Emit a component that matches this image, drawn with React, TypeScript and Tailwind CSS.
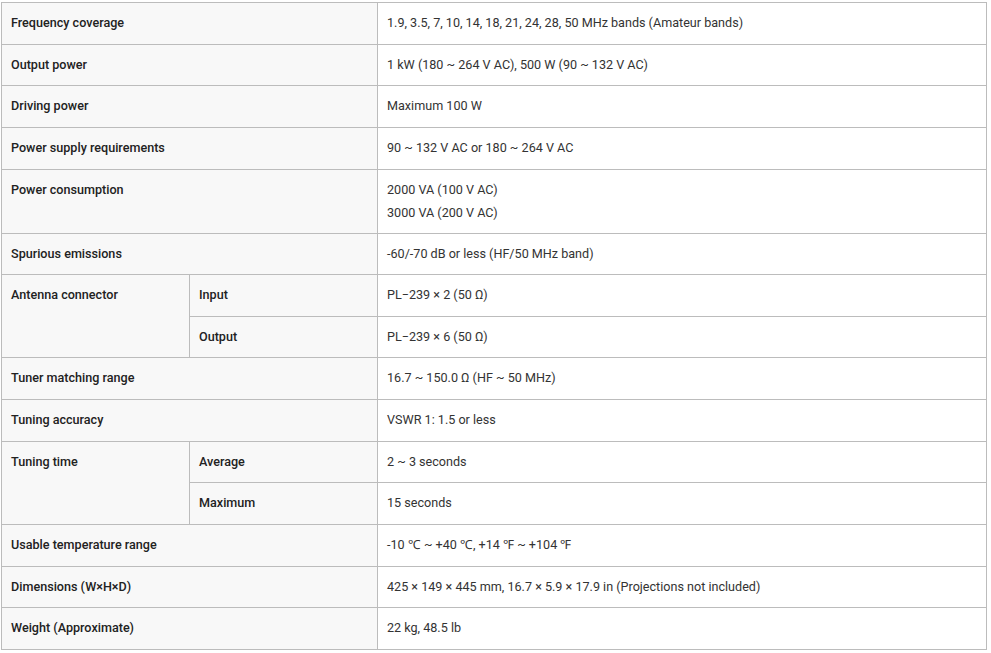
import React from "react";

type Row = { label: string; value: React.ReactNode };

const rows: Row[] = [
  { label: "Frequency coverage", value: "1.9, 3.5, 7, 10, 14, 18, 21, 24, 28, 50 MHz bands (Amateur bands)" },
  { label: "Output power", value: "1 kW (180 ~ 264 V AC), 500 W (90 ~ 132 V AC)" },
  { label: "Driving power", value: "Maximum 100 W" },
  { label: "Power supply requirements", value: "90 ~ 132 V AC or 180 ~ 264 V AC" },
];

const rows2: Row[] = [
  { label: "Tuner matching range", value: "16.7 ~ 150.0 Ω (HF ~ 50 MHz)" },
  { label: "Tuning accuracy", value: "VSWR 1: 1.5 or less" },
];

const rows3: Row[] = [
  { label: "Usable temperature range", value: "-10 ℃ ~ +40 ℃, +14 ℉ ~ +104 ℉" },
  { label: "Dimensions (W×H×D)", value: "425 × 149 × 445 mm, 16.7 × 5.9 × 17.9 in (Projections not included)" },
  { label: "Weight (Approximate)", value: "22 kg, 48.5 lb" },
];

const th = "border border-[#bcbcbc] bg-[#f8f8f8] px-[9px] text-left align-top pt-[11px] font-medium text-[#222]";
const td = "border border-[#bcbcbc] bg-white px-[9px] align-top pt-[11px] text-[#333]";

const Simple = ({ r }: { r: Row }) => (
  <tr className="h-[41.65px]">
    <td colSpan={2} className={th}>{r.label}</td>
    <td className={td}>{r.value}</td>
  </tr>
);

export default function App() {
  return (
    <div className="bg-white w-[991px] h-[653px] pt-[2px] pl-[1px]" style={{ fontFamily: "Roboto, 'Liberation Sans', sans-serif" }}>
      <table className="border-collapse table-fixed w-[986px] text-[12.6px] leading-[18px]">
        <colgroup>
          <col className="w-[188px]" />
          <col className="w-[188px]" />
          <col />
        </colgroup>
        <tbody>
          {rows.map((r) => <Simple key={r.label} r={r} />)}
          <tr className="h-[64px]">
            <td colSpan={2} className={th}>Power consumption</td>
            <td className={td}>
              <div className="flex flex-col gap-[5px]">
                <span>2000 VA (100 V AC)</span>
                <span>3000 VA (200 V AC)</span>
              </div>
            </td>
          </tr>
          <Simple r={{ label: "Spurious emissions", value: "-60/-70 dB or less (HF/50 MHz band)" }} />
          <tr className="h-[41.65px]">
            <td rowSpan={2} className={th}>Antenna connector</td>
            <td className={th}>Input</td>
            <td className={td}>PL−239 × 2 (50 Ω)</td>
          </tr>
          <tr className="h-[41.65px]">
            <td className={th}>Output</td>
            <td className={td}>PL−239 × 6 (50 Ω)</td>
          </tr>
          {rows2.map((r) => <Simple key={r.label} r={r} />)}
          <tr className="h-[41.65px]">
            <td rowSpan={2} className={th}>Tuning time</td>
            <td className={th}>Average</td>
            <td className={td}>2 ~ 3 seconds</td>
          </tr>
          <tr className="h-[41.65px]">
            <td className={th}>Maximum</td>
            <td className={td}>15 seconds</td>
          </tr>
          {rows3.map((r) => <Simple key={r.label} r={r} />)}
        </tbody>
      </table>
    </div>
  );
}
